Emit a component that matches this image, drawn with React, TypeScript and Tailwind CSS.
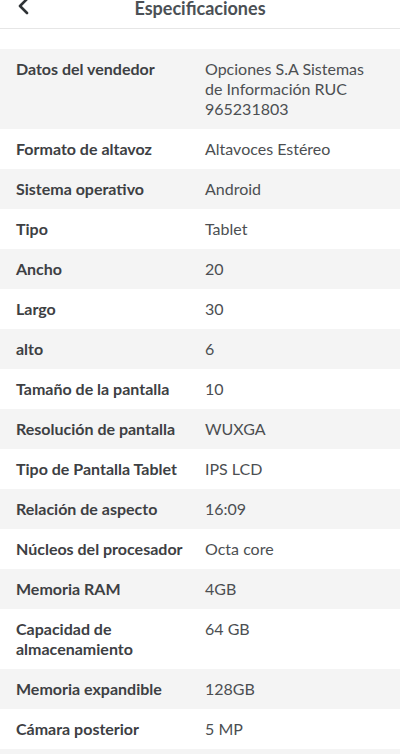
import React from "react";

const rows: [string, string][] = [
  ["Datos del vendedor", "Opciones S.A Sistemas de Información RUC 965231803"],
  ["Formato de altavoz", "Altavoces Estéreo"],
  ["Sistema operativo", "Android"],
  ["Tipo", "Tablet"],
  ["Ancho", "20"],
  ["Largo", "30"],
  ["alto", "6"],
  ["Tamaño de la pantalla", "10"],
  ["Resolución de pantalla", "WUXGA"],
  ["Tipo de Pantalla Tablet", "IPS LCD"],
  ["Relación de aspecto", "16:09"],
  ["Núcleos del procesador", "Octa core"],
  ["Memoria RAM", "4GB"],
  ["Capacidad de almacenamiento", "64 GB"],
  ["Memoria expandible", "128GB"],
  ["Cámara posterior", "5 MP"],
];

export default function App() {
  return (
    <div
      className="w-[400px] h-[754px] overflow-hidden bg-white"
      style={{ fontFamily: "Lato, 'Noto Sans', sans-serif" }}
    >
      <div className="relative h-[29px] border-b border-[#e6e6e6] flex items-center justify-center">
        <svg
          className="absolute left-[16px] top-[-4px]"
          width="16"
          height="20"
          viewBox="0 0 16 20"
          fill="none"
        >
          <path d="M11 3 L4 10 L11 17" stroke="#2f3336" strokeWidth="2.6" strokeLinecap="round" strokeLinejoin="round" />
        </svg>
        <div className="text-[18px] font-bold text-[#4b5055] leading-none -mt-[13px]">
          Especificaciones
        </div>
      </div>
      <div className="h-[20px]" />
      <div>
        {rows.map(([k, v], i) => (
          <div
            key={k}
            className={`grid grid-cols-[189px_1fr] pl-4 pr-4 py-[10px] text-[16px] leading-[20px] ${
              i % 2 === 0 ? "bg-[#f4f4f4]" : "bg-white"
            }`}
          >
            <div className="font-bold text-[#3d4043] pr-3">{k}</div>
            <div className="text-[#4c4f52]">{v}</div>
          </div>
        ))}
        <div className="h-[40px] bg-[#f4f4f4]" />
      </div>
    </div>
  );
}
